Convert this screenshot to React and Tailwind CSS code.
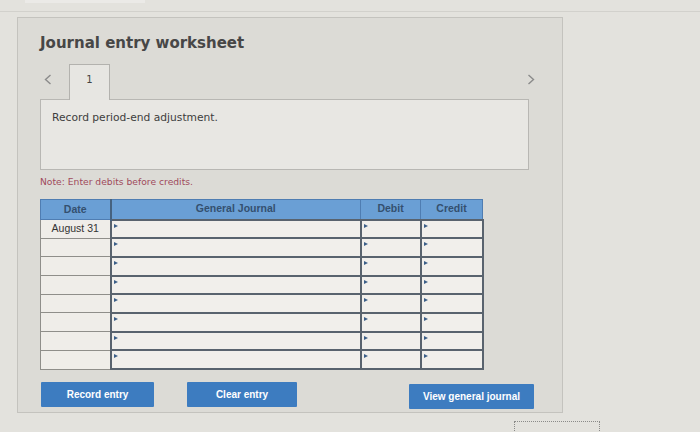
const rows = ['August 31', '', '', '', '', '', '', ''];

function Marker() {
  return (
    <span className="absolute left-[2px] top-[3px] w-0 h-0 border-y-[2.5px] border-y-transparent border-l-[4px] border-l-[#3c5f88]"></span>
  );
}

function Chevron({ dir }) {
  return (
    <svg width="8" height="11" viewBox="0 0 8 11" fill="none" stroke="#8b8b8b" strokeWidth="1.4">
      {dir === 'left' ? <polyline points="6.5,1 1.5,5.5 6.5,10" /> : <polyline points="1.5,1 6.5,5.5 1.5,10" />}
    </svg>
  );
}

export default function App() {
  return (
    <div className="w-[700px] h-[432px] overflow-hidden bg-[#e3e2dd] font-['DejaVu_Sans',sans-serif]">
      {/* top strip */}
      <div className="h-[12px] border-b border-[#d2d1cc]">
        <div className="ml-[25px] w-[120px] h-[3px] bg-[#ebeae7]"></div>
      </div>

      <div className="relative ml-[17px] mt-[5px] w-[546px] h-[396px] border border-[#c4c3be] bg-[#dcdbd6] pl-[22px] pt-[15px]">
        <h1 className="text-[15px] leading-[20px] font-bold text-[#474747]">Journal entry worksheet</h1>

        <div className="mt-[11px] w-[495px] h-[35px] flex items-end justify-between">
          <div className="flex items-end">
            <div className="w-[29px] h-[35px] flex items-center pl-[4px] pb-[4px]">
              <Chevron dir="left" />
            </div>
            <div className="relative z-10 -mb-px w-[41px] h-[36px] border border-b-0 border-[#b3b2ae] bg-[#e7e6e2] flex justify-center pt-[7px] text-[10px] text-[#444]">
              1
            </div>
          </div>
          <div className="h-[35px] flex items-center pb-[4px]">
            <Chevron dir="right" />
          </div>
        </div>

        <div className="w-[489px] h-[71px] border border-[#b8b7b3] bg-[#e8e7e3] px-[11px] pt-[11px] text-[10.7px] leading-[14px] text-[#3d3d3d]">
          Record period-end adjustment.
        </div>

        <p className="mt-[6px] text-[9.2px] leading-[12px] text-[#a04a5c]">Note: Enter debits before credits.</p>

        <table className="mt-[11px] w-[442px] table-fixed border-collapse font-['Liberation_Sans',Arial,sans-serif]">
          <colgroup>
            <col className="w-[70px]" />
            <col className="w-[250px]" />
            <col className="w-[60px]" />
            <col className="w-[62px]" />
          </colgroup>
          <thead>
            <tr className="h-[20px] bg-[#6a9fd5] text-[10.5px] font-bold text-[#34506f]">
              <th className="border border-[#4f7db2] font-bold">Date</th>
              <th className="border border-l-2 border-[#4f7db2] border-l-[#46627f] font-bold">General Journal</th>
              <th className="border border-[#4f7db2] font-bold">Debit</th>
              <th className="border border-[#4f7db2] font-bold">Credit</th>
            </tr>
          </thead>
          <tbody>
            {rows.map((d, i) => (
              <tr key={i} className="h-[18.7px]">
                <td className="border border-[#8f8e8a] bg-[#efede9] text-center text-[10.5px] text-[#333]">{d}</td>
                <td className="relative border-2 border-[#59636e] bg-[#f1efeb]"><Marker /></td>
                <td className="relative border-2 border-[#59636e] bg-[#f1efeb]"><Marker /></td>
                <td className="relative border-2 border-[#59636e] bg-[#f1efeb]"><Marker /></td>
              </tr>
            ))}
          </tbody>
        </table>

        <div className="mt-[12px] flex items-start font-['Liberation_Sans',Arial,sans-serif] text-[10px] font-bold text-white">
          <button className="ml-px w-[113px] h-[25px] bg-[#3d7cc0] rounded-[1px]">Record entry</button>
          <button className="ml-[33px] w-[110px] h-[25px] bg-[#3d7cc0] rounded-[1px]">Clear entry</button>
          <button className="ml-[112px] mt-[2px] w-[125px] h-[25px] bg-[#3d7cc0] rounded-[1px]">View general journal</button>
        </div>
      </div>

      <div className="ml-[514px] mt-[8px] w-[86px] h-[20px] border-t border-l border-r border-dotted border-[#8a8a88]"></div>
    </div>
  );
}
